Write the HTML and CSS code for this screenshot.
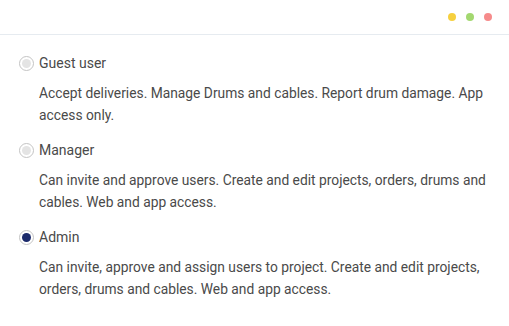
FILE: index.html
```html
<!DOCTYPE html>
<html>
<head>
<meta charset="utf-8">
<link rel="stylesheet" href="styles.css">
</head>
<body>
<div class="window">
  <div class="titlebar">
    <span class="dot yellow"></span>
    <span class="dot green"></span>
    <span class="dot red"></span>
  </div>
  <div class="content">
    <div class="option">
      <div class="option-head">
        <span class="radio"></span>
        <span class="label">Guest user</span>
      </div>
      <p class="desc">Accept deliveries. Manage Drums and cables. Report drum damage. App access only.</p>
    </div>
    <div class="option">
      <div class="option-head">
        <span class="radio"></span>
        <span class="label">Manager</span>
      </div>
      <p class="desc">Can invite and approve users. Create and edit projects, orders, drums and cables. Web and app access.</p>
    </div>
    <div class="option">
      <div class="option-head">
        <span class="radio checked"></span>
        <span class="label">Admin</span>
      </div>
      <p class="desc">Can invite, approve and assign users to project. Create and edit projects, orders, drums and cables. Web and app access.</p>
    </div>
  </div>
</div>
</body>
</html>
```

FILE: styles.css
```css
html, body {
  margin: 0;
  padding: 0;
  background: #ffffff;
}
body {
  font-family: Roboto, "Liberation Sans", sans-serif;
  color: #4a4a4a;
  width: 509px;
  height: 326px;
  overflow: hidden;
}
.titlebar {
  height: 34px;
  border-bottom: 1px solid #e6ebf0;
  display: flex;
  justify-content: flex-end;
  align-items: center;
  gap: 10px;
  padding-right: 17px;
}
.dot {
  width: 8px;
  height: 8px;
  border-radius: 50%;
}
.yellow { background: #f6d03f; }
.green { background: #a3d870; }
.red { background: #f68b8b; }
.content {
  padding: 17px 20px 0 19px;
  display: flex;
  flex-direction: column;
  gap: 13px;
}
.option-head {
  display: flex;
  align-items: center;
  gap: 5px;
  height: 22px;
}
.radio {
  width: 13px;
  height: 13px;
  border: 1px solid #c4c4c4;
  border-radius: 50%;
  display: flex;
  align-items: center;
  justify-content: center;
  box-sizing: content-box;
  background: #fff;
}
.radio::after {
  content: "";
  width: 9px;
  height: 9px;
  border-radius: 50%;
  background: #e4e4e4;
}
.radio.checked::after {
  background: #1b2a6b;
}
.label {
  font-size: 14px;
  line-height: 22px;
}
.desc {
  margin: 9px 0 0 20px;
  font-size: 13.8px;
  line-height: 21.5px;
}
```
